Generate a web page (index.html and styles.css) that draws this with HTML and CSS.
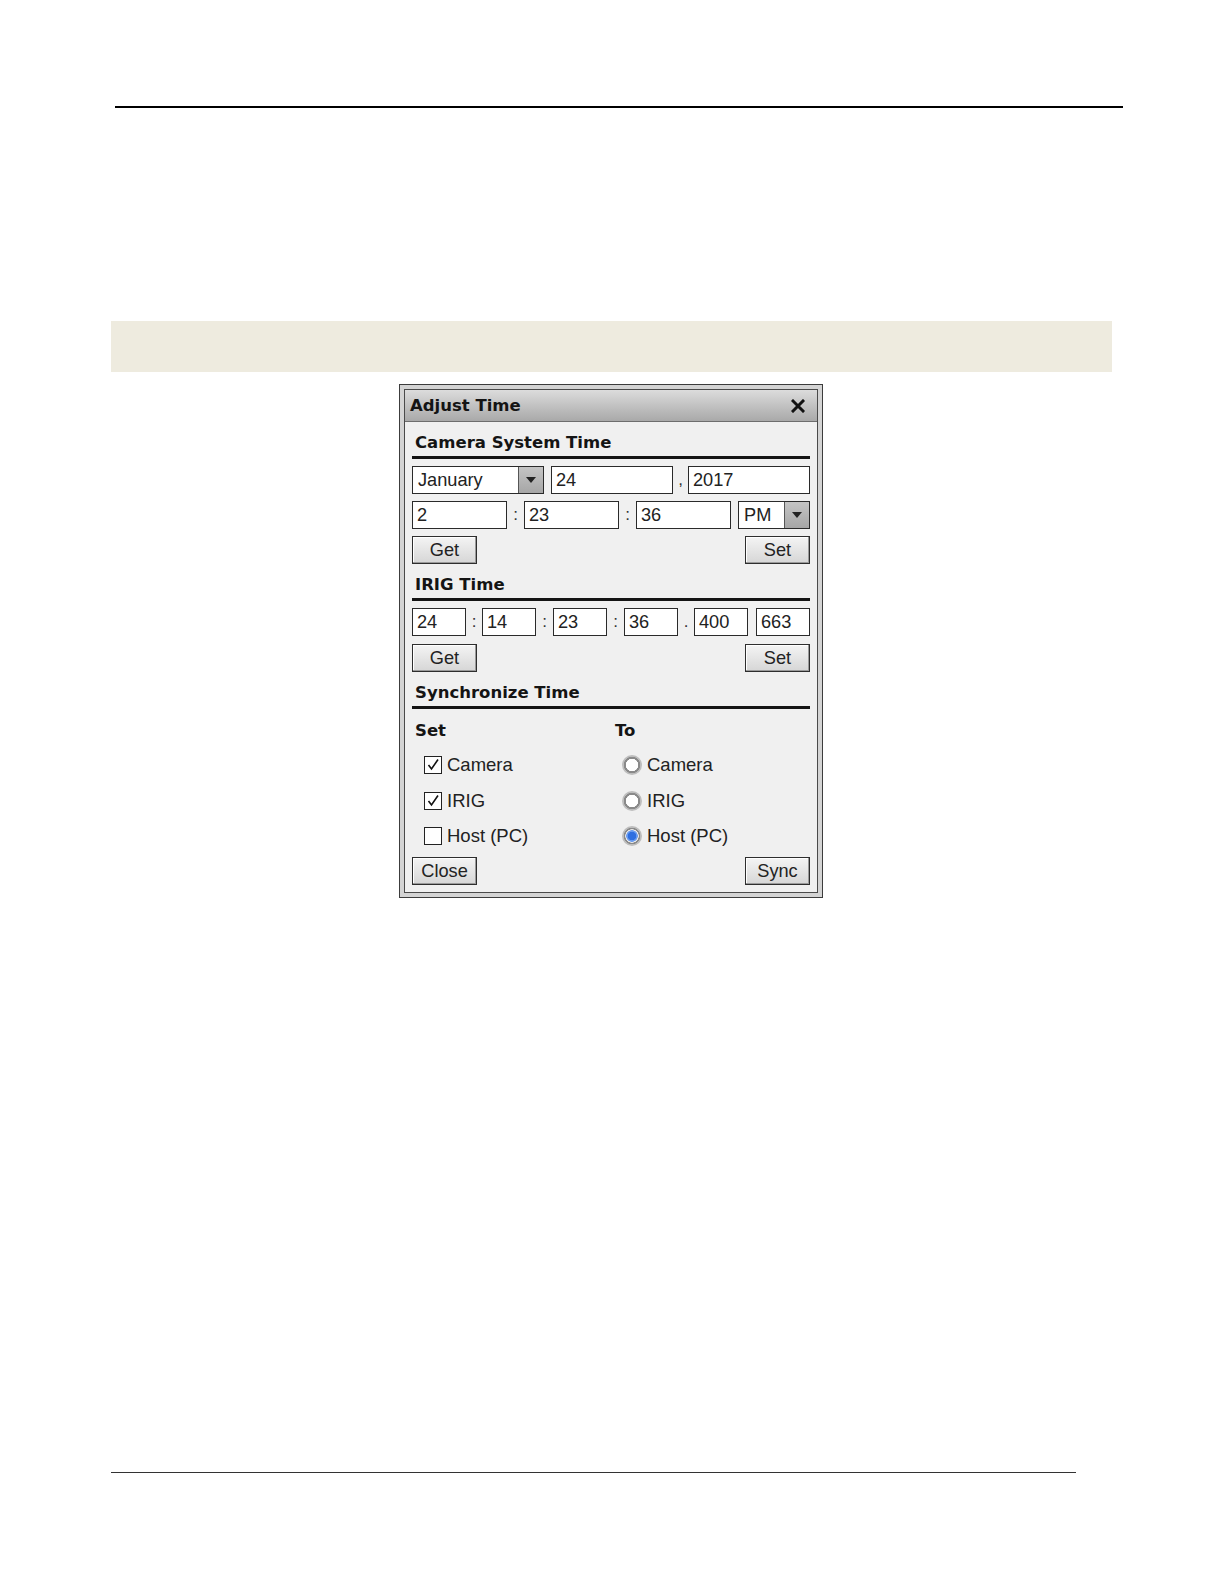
FILE: index.html
```html
<!DOCTYPE html>
<html>
<head>
<meta charset="utf-8">
<title>Adjust Time</title>
<link rel="stylesheet" href="styles.css">
</head>
<body>
<div class="page">
  <div class="rule-top"></div>
  <div class="band"></div>
  <div class="dialog">
    <div class="dialog-inner">
      <div class="titlebar">
        <span class="title">Adjust Time</span>
        <svg class="close-x" width="14" height="14" viewBox="0 0 14 14"><path d="M2 2 L12 12 M12 2 L2 12" stroke="#111" stroke-width="3" stroke-linecap="square"/></svg>
      </div>
      <div class="content">
        <div class="heading heading-1">Camera System Time</div>
        <div class="row row-date">
          <div class="select sel-month"><span class="val">January</span><span class="drop"><svg width="10" height="6" viewBox="0 0 10 6"><path d="M0 0 H10 L5 6 Z" fill="#222"/></svg></span></div>
          <div class="box w-day">24</div>
          <span class="sep">,</span>
          <div class="box w-year">2017</div>
        </div>
        <div class="row row-time">
          <div class="box w-t">2</div>
          <span class="sep">:</span>
          <div class="box w-t">23</div>
          <span class="sep">:</span>
          <div class="box w-t">36</div>
          <div class="select sel-ampm"><span class="val">PM</span><span class="drop"><svg width="10" height="6" viewBox="0 0 10 6"><path d="M0 0 H10 L5 6 Z" fill="#222"/></svg></span></div>
        </div>
        <div class="btn-row">
          <div class="btn">Get</div>
          <div class="btn">Set</div>
        </div>

        <div class="heading heading-2">IRIG Time</div>
        <div class="row row-irig">
          <div class="box w-i">24</div>
          <span class="sep s16">:</span>
          <div class="box w-i">14</div>
          <span class="sep s17">:</span>
          <div class="box w-i">23</div>
          <span class="sep s17">:</span>
          <div class="box w-i">36</div>
          <span class="sep s16">.</span>
          <div class="box w-i">400</div>
          <div class="box w-i last">663</div>
        </div>
        <div class="btn-row btn-row-irig">
          <div class="btn">Get</div>
          <div class="btn">Set</div>
        </div>

        <div class="heading heading-2">Synchronize Time</div>
        <div class="sync">
          <div class="col col-set">
            <div class="col-title">Set</div>
            <div class="opt"><span class="cb"><svg width="14" height="14" viewBox="0 0 14 14"><path d="M2.5 7 L5.5 11 L12 1.5" fill="none" stroke="#111" stroke-width="1.6"/></svg></span>Camera</div>
            <div class="opt"><span class="cb"><svg width="14" height="14" viewBox="0 0 14 14"><path d="M2.5 7 L5.5 11 L12 1.5" fill="none" stroke="#111" stroke-width="1.6"/></svg></span>IRIG</div>
            <div class="opt"><span class="cb"></span>Host (PC)</div>
          </div>
          <div class="col col-to">
            <div class="col-title">To</div>
            <div class="opt"><span class="radio"></span>Camera</div>
            <div class="opt"><span class="radio"></span>IRIG</div>
            <div class="opt"><span class="radio on"></span>Host (PC)</div>
          </div>
        </div>
        <div class="btn-row btn-row-last">
          <div class="btn">Close</div>
          <div class="btn">Sync</div>
        </div>
      </div>
    </div>
  </div>
  <div class="rule-bottom"></div>
</div>
</body>
</html>
```
FILE: styles.css
```css
html, body {
  margin: 0;
  padding: 0;
  background: #ffffff;
}
body {
  width: 1224px;
  height: 1584px;
  overflow: hidden;
  font-family: "Liberation Sans", Arial, sans-serif;
  color: #111;
}
.page {
  display: flex;
  flex-direction: column;
  align-items: flex-start;
}
.rule-top {
  margin-top: 106px;
  margin-left: 115px;
  width: 1008px;
  height: 2px;
  background: #000;
}
.band {
  margin-top: 213px;
  margin-left: 111px;
  width: 1001px;
  height: 51px;
  background: #eeebdf;
}
.dialog {
  margin-top: 12px;
  margin-left: 399px;
  width: 424px;
  height: 514px;
  box-sizing: border-box;
  border: 1px solid #3c3c3c;
  background: #d4d4d4;
  padding: 4px;
}
.dialog-inner {
  box-sizing: border-box;
  height: 100%;
  border: 1px solid #4a4a4a;
  background: #f0f0f0;
  display: flex;
  flex-direction: column;
}
.titlebar {
  height: 32px;
  box-sizing: border-box;
  border-bottom: 1px solid #6d6d6d;
  background: linear-gradient(#dcdcdc, #bdbdbd 60%, #a9a9a9);
  display: flex;
  align-items: center;
  justify-content: space-between;
  padding: 0 12px 0 5px;
}
.title {
  font-family: "DejaVu Sans", Verdana, sans-serif;
  font-weight: bold;
  font-size: 16.5px;
  color: #141414;
}
.close-x {
  display: block;
}
.content {
  padding: 0 7px 0 7px;
  display: flex;
  flex-direction: column;
}
.heading {
  font-family: "DejaVu Sans", Verdana, sans-serif;
  font-weight: bold;
  font-size: 16.5px;
  line-height: 20px;
  padding: 11px 0 3px 3px;
  border-bottom: 3px solid #141414;
  color: #141414;
}
.heading-1 {
  padding-top: 11px;
}
.row {
  display: flex;
  align-items: center;
  height: 28px;
  font-size: 18px;
}
.row-date {
  margin-top: 7px;
}
.row-time {
  margin-top: 7px;
}
.row-irig {
  margin-top: 7px;
}
.box {
  box-sizing: border-box;
  height: 28px;
  border: 1px solid #2a2a2a;
  background: #fff;
  padding-left: 4px;
  line-height: 26px;
  font-size: 18.2px;
  color: #222;
}
.sep {
  width: 15px;
  text-align: center;
  color: #333;
  font-size: 17px;
}
.w-day { width: 122px; margin-left: 7px; }
.w-year { width: 122px; }
.w-t { width: 95px; }
.w-i { width: 54px; }
.w-i.last { margin-left: 8px; }
.row-time .sep { width: 17px; }
.row-irig .sep.s16 { width: 16px; }
.row-irig .sep.s17 { width: 17px; }
.select {
  box-sizing: border-box;
  height: 28px;
  border: 1px solid #2a2a2a;
  background: #fff;
  display: flex;
  align-items: stretch;
}
.select .val {
  flex: 1;
  padding-left: 5px;
  line-height: 26px;
  font-size: 18.2px;
  color: #222;
}
.select .drop {
  width: 24px;
  border-left: 1px solid #555;
  background: linear-gradient(#c4c4c4, #a6a6a6);
  display: flex;
  align-items: center;
  justify-content: center;
}
.sel-month { width: 132px; }
.sel-ampm { width: 72px; margin-left: 7px; }
.btn-row {
  display: flex;
  justify-content: space-between;
  margin-top: 7px;
}
.btn-row-irig {
  margin-top: 8px;
}
.btn {
  box-sizing: border-box;
  width: 65px;
  height: 28px;
  border: 1px solid #2e2e2e;
  background: linear-gradient(#f4f4f4, #d6d6d6);
  text-align: center;
  line-height: 26px;
  font-size: 18.2px;
  color: #222;
  box-shadow: inset -1px -1px 0 #9a9a9a, inset 1px 1px 0 #ffffff;
}
.sync {
  display: flex;
  margin-top: 11px;
}
.col {
  display: flex;
  flex-direction: column;
}
.col-set {
  width: 200px;
}
.col-title {
  font-family: "DejaVu Sans", Verdana, sans-serif;
  font-weight: bold;
  font-size: 16.5px;
  line-height: 22px;
  padding-left: 3px;
  color: #141414;
}
.opt {
  display: flex;
  align-items: center;
  height: 24px;
  margin-top: 11.3px;
  font-size: 18.5px;
  color: #222;
  padding-left: 12px;
}
.col-to .opt {
  padding-left: 10px;
}
.cb {
  box-sizing: border-box;
  width: 18px;
  height: 18px;
  border: 1px solid #222;
  background: #fff;
  margin-right: 5px;
  display: flex;
  align-items: center;
  justify-content: center;
}
.radio {
  box-sizing: border-box;
  width: 20px;
  height: 20px;
  border-radius: 50%;
  background: radial-gradient(circle, #ffffff 0 5px, #ffffff 5px 6px, #8a8a8a 6.5px 8px, #bdbdbd 8.5px 10px);
  margin-right: 5px;
}
.radio.on {
  background: radial-gradient(circle, #2f6fe0 0 4px, #6a9cf0 4.5px 5.5px, #e8e8e8 6px 6.5px, #8a8a8a 7px 8px, #bdbdbd 8.5px 10px);
}
.btn-row-last {
  margin-top: 9px;
}
.rule-bottom {
  margin-top: 574px;
  margin-left: 111px;
  width: 965px;
  height: 1px;
  background: #333;
}
```
